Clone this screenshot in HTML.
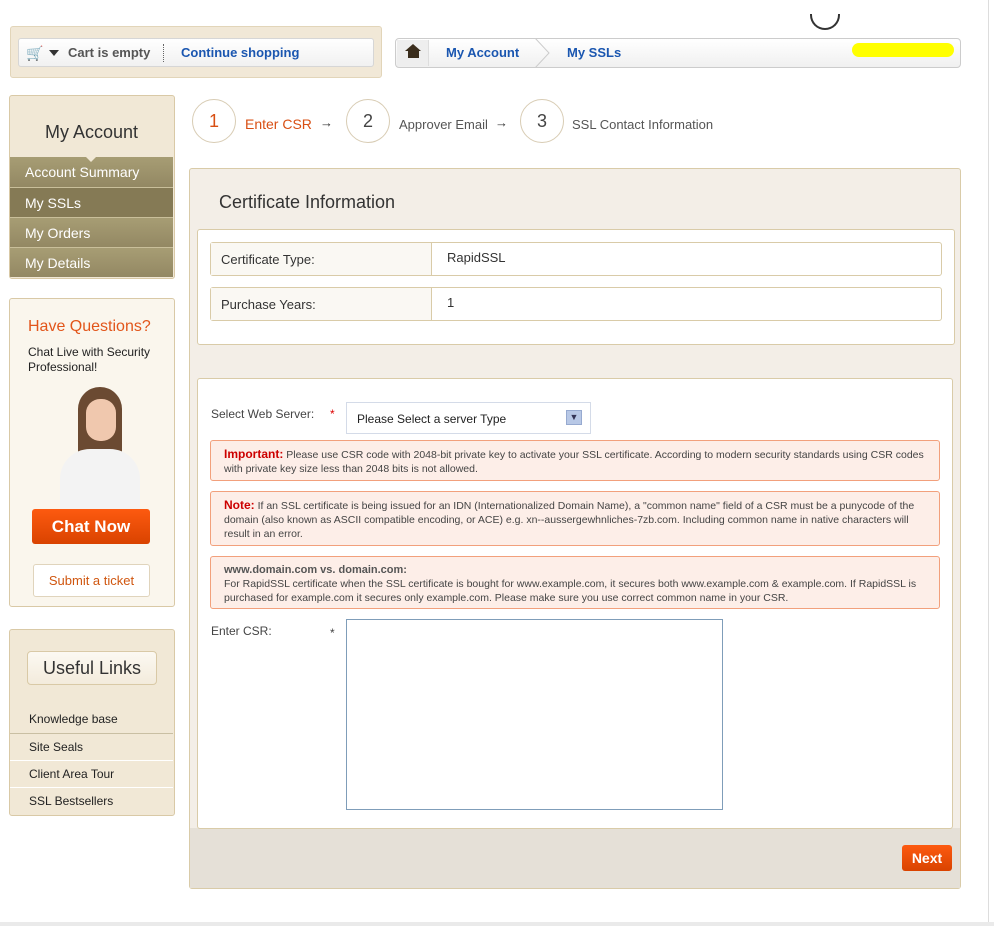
<!DOCTYPE html>
<html><head><meta charset="utf-8"><style>
*{box-sizing:border-box;margin:0;padding:0}
body{width:994px;height:926px;background:#fff;font-family:"Liberation Sans",sans-serif;position:relative;overflow:hidden}
.a{position:absolute}
.side{border:1px solid #d9c9a6;border-radius:3px}
.mi{position:absolute;left:0;width:163px;height:30px;color:#fff;font-size:14px;padding:7px 0 0 15px;border-top:1px solid #c9bf9a}
.circ{position:absolute;width:44px;height:44px;border:1px solid #d8ccb4;border-radius:50%;text-align:center;line-height:42px;font-size:18px;color:#444;background:#fff}
.st{position:absolute;top:117px;font-size:13px;color:#555}
.row{position:absolute;left:210px;width:732px;height:34px;border:1px solid #d9cba8;border-radius:3px;background:#fff}
.row .l{position:absolute;left:0;top:0;width:221px;height:32px;background:#faf8f3;border-right:1px solid #d9cba8;padding:9px 10px;font-size:13px;color:#333}
.row .v{position:absolute;left:236px;top:7px;font-size:13px;color:#333}
.note{position:absolute;left:210px;width:730px;background:#fdeee8;border:1px solid #f2a07c;border-radius:3px;font-size:10.5px;color:#444;padding:6px 13px;line-height:14px}
.ul{position:absolute;left:0;width:163px;height:27px;border-top:1px solid #fff;font-size:12px;color:#222;padding:6px 0 0 19px}
</style></head><body>
<div class="a" style="right:5px;top:0;width:1px;height:922px;background:#ddd"></div>
<div class="a" style="left:0;top:922px;width:994px;height:4px;background:#eaeaea"></div>
<div class="a" style="left:810px;top:6px;width:30px;height:24px;border:2px solid #333;border-top:none;border-radius:0 0 15px 15px;clip-path:inset(8px 0 0 0)"></div>
<!-- cart -->
<div class="a" style="left:10px;top:26px;width:372px;height:52px;background:#f1e8d7;border:1px solid #e2d5b9;border-radius:3px"></div>
<div class="a" style="left:18px;top:38px;width:356px;height:29px;background:linear-gradient(#fff,#f1f1f1);border:1px solid #d6d6d6;border-radius:3px"></div>
<div class="a" style="left:26px;top:45px;font-size:14px;color:#333">&#x1F6D2;</div>
<div class="a" style="left:49px;top:50px;border:5px solid transparent;border-top:6px solid #333"></div>
<div class="a" style="left:68px;top:45px;font-size:13px;font-weight:bold;color:#555">Cart is empty</div>
<div class="a" style="left:163px;top:44px;height:18px;border-left:1px dotted #666"></div>
<div class="a" style="left:181px;top:45px;font-size:13px;font-weight:bold;color:#1a56b0">Continue shopping</div>
<!-- breadcrumb -->
<div class="a" style="left:395px;top:38px;width:566px;height:30px;background:linear-gradient(#fff,#f0f0f0);border:1px solid #ccc;border-radius:4px"></div>
<div class="a" style="left:397px;top:40px;width:32px;height:26px;background:#eee;border-right:1px solid #ddd"></div>
<div class="a" style="left:405px;top:44px;border:8px solid transparent;border-bottom:7px solid #3a2d1c;border-top:none"></div>
<div class="a" style="left:408px;top:51px;width:11px;height:7px;background:#3a2d1c"></div>
<div class="a" style="left:446px;top:45px;font-size:13px;font-weight:bold;color:#1a56b0">My Account</div>
<svg class="a" style="left:532px;top:38px" width="20" height="30"><path d="M3 0 L17 15 L3 30" fill="none" stroke="#ccc"/></svg>
<div class="a" style="left:567px;top:45px;font-size:13px;font-weight:bold;color:#1a56b0">My SSLs</div>
<div class="a" style="left:852px;top:43px;width:102px;height:14px;background:#ffff00;border-radius:7px"></div>
<!-- My account -->
<div class="a side" style="left:9px;top:95px;width:166px;height:184px;background:#f1e8d6;overflow:hidden">
<div class="a" style="left:0;top:26px;width:163px;text-align:center;font-size:18px;color:#333">My Account</div>
<div class="mi" style="top:61px;background:linear-gradient(#a79d74,#938863);border-top:none">Account Summary</div>
<div class="a" style="left:75px;top:60px;border:6px solid transparent;border-top:6px solid #f1e8d6"></div>
<div class="mi" style="top:91px;background:#857a55">My SSLs</div>
<div class="mi" style="top:121px;background:linear-gradient(#a79d74,#938863)">My Orders</div>
<div class="mi" style="top:151px;background:linear-gradient(#a79d74,#938863)">My Details</div>
</div>
<!-- questions -->
<div class="a side" style="left:9px;top:298px;width:166px;height:309px;background:#faf6ed">
<div class="a" style="left:18px;top:19px;font-size:16px;color:#e2551a">Have Questions?</div>
<div class="a" style="left:18px;top:46px;font-size:12px;color:#222;line-height:15px">Chat Live with Security<br>Professional!</div>
<div class="a" style="left:68px;top:88px;width:44px;height:115px;background:#6b4a32;border-radius:25px 25px 8px 8px"></div>
<div class="a" style="left:76px;top:100px;width:30px;height:42px;background:#f0c8ae;border-radius:14px"></div>
<div class="a" style="left:50px;top:150px;width:80px;height:60px;background:#f3f3f3;border-radius:30px 30px 0 0"></div>
<div class="a" style="left:22px;top:210px;width:118px;height:35px;background:linear-gradient(#fd5a10,#d94300);border-radius:3px;color:#fff;font-weight:bold;font-size:17px;text-align:center;line-height:35px">Chat Now</div>
<div class="a" style="left:23px;top:265px;width:117px;height:33px;background:#fff;border:1px solid #e0d4bc;border-radius:3px;color:#d0560f;font-size:13px;text-align:center;line-height:31px">Submit a ticket</div>
</div>
<!-- useful links -->
<div class="a side" style="left:9px;top:629px;width:166px;height:187px;background:#f1e8d6;overflow:hidden">
<div class="a" style="left:17px;top:21px;width:130px;height:34px;border:1px solid #d9c9a6;border-radius:4px;background:linear-gradient(#fcf9f2,#f3ebdc);text-align:center;line-height:32px;font-size:18px;color:#333">Useful Links</div>
<div class="ul" style="top:76px;border-top:none">Knowledge base</div>
<div class="ul" style="top:103px;border-top-color:#c9bfa3">Site Seals</div>
<div class="ul" style="top:130px;border-top-color:#fff">Client Area Tour</div>
<div class="ul" style="top:157px;border-top-color:#fff">SSL Bestsellers</div>
</div>
<!-- steps -->
<div class="circ" style="left:192px;top:99px;color:#d84f13">1</div>
<div class="st" style="left:245px;color:#d84f13;font-size:14px;top:116px">Enter CSR</div>
<div class="st" style="left:320px;top:115px;color:#333">&#8594;</div>
<div class="circ" style="left:346px;top:99px">2</div>
<div class="st" style="left:399px">Approver Email</div>
<div class="st" style="left:495px;top:115px;color:#333">&#8594;</div>
<div class="circ" style="left:520px;top:99px">3</div>
<div class="st" style="left:572px">SSL Contact Information</div>
<!-- main -->
<div class="a" style="left:189px;top:168px;width:772px;height:721px;background:#f3eee7;border:1px solid #d9cba8;border-radius:3px"></div>
<div class="a" style="left:190px;top:828px;width:770px;height:60px;background:#e5e0d7"></div>
<div class="a" style="left:219px;top:192px;font-size:18px;color:#333;font-weight:500">Certificate Information</div>
<div class="a" style="left:197px;top:229px;width:758px;height:116px;background:#fff;border:1px solid #d9cba8;border-radius:3px"></div>
<div class="row" style="top:242px"><div class="l">Certificate Type:</div><div class="v">RapidSSL</div></div>
<div class="row" style="top:287px"><div class="l">Purchase Years:</div><div class="v">1</div></div>
<div class="a" style="left:197px;top:378px;width:756px;height:451px;background:#fff;border:1px solid #d9cba8;border-radius:3px"></div>
<div class="a" style="left:211px;top:407px;font-size:12px;color:#444">Select Web Server:</div>
<div class="a" style="left:330px;top:407px;font-size:12px;color:#d00">*</div>
<div class="a" style="left:346px;top:402px;width:245px;height:32px;border:1px solid #d4dbe8;padding:9px 10px;font-size:12px;color:#222">Please Select a server Type</div>
<div class="a" style="left:566px;top:410px;width:16px;height:15px;background:#b8c8e6;border:1px solid #97aad0;font-size:9px;text-align:center;color:#335;line-height:13px">&#9660;</div>
<div class="note" style="top:440px;height:41px"><b style="color:#c00;font-size:12px">Important:</b> Please use CSR code with 2048-bit private key to activate your SSL certificate. According to modern security standards using CSR codes with private key size less than 2048 bits is not allowed.</div>
<div class="note" style="top:491px;height:55px"><b style="color:#c00;font-size:12px">Note:</b> If an SSL certificate is being issued for an IDN (Internationalized Domain Name), a "common name" field of a CSR must be a punycode of the domain (also known as ASCII compatible encoding, or ACE) e.g. xn--aussergewhnliches-7zb.com. Including common name in native characters will result in an error.</div>
<div class="note" style="top:556px;height:53px"><b style="font-size:11px;color:#555">www.domain.com vs. domain.com:</b><br>For RapidSSL certificate when the SSL certificate is bought for www.example.com, it secures both www.example.com &amp; example.com. If RapidSSL is purchased for example.com it secures only example.com. Please make sure you use correct common name in your CSR.</div>
<div class="a" style="left:211px;top:624px;font-size:12px;color:#444">Enter CSR:</div>
<div class="a" style="left:330px;top:626px;font-size:12px;color:#444">*</div>
<div class="a" style="left:346px;top:619px;width:377px;height:191px;border:1px solid #7f9db9"></div>
<div class="a" style="left:902px;top:845px;width:50px;height:26px;background:linear-gradient(#fd5a10,#d94300);border-radius:3px;color:#fff;font-weight:bold;font-size:14px;text-align:center;line-height:26px">Next</div>
</body></html>
